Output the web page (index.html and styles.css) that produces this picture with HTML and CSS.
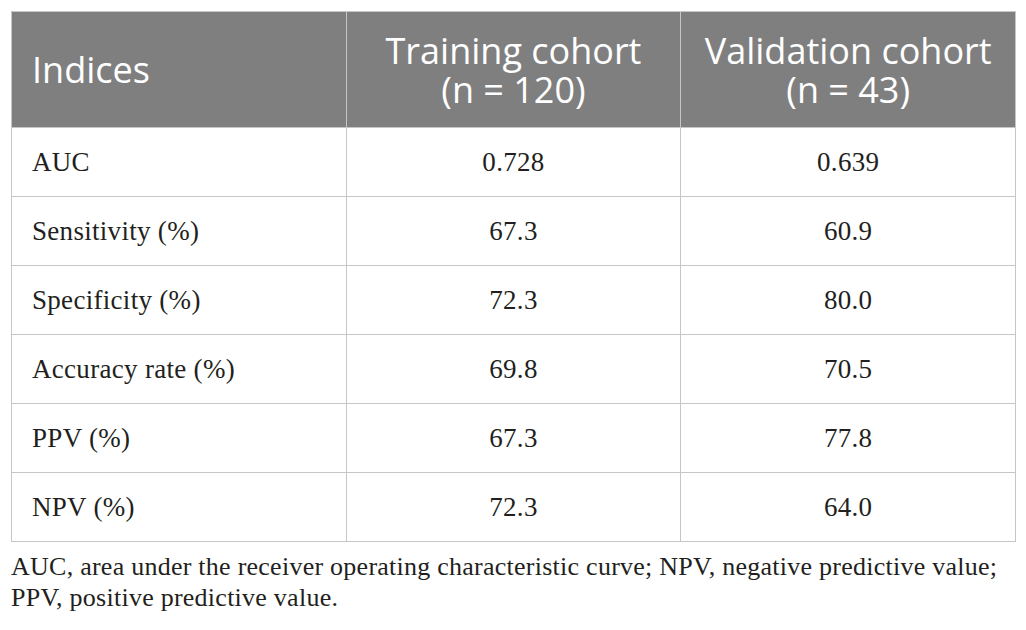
FILE: index.html
```html
<!DOCTYPE html>
<html>
<head>
<meta charset="utf-8">
<link rel="stylesheet" href="styles.css">
</head>
<body>
<div class="wrap">
<table class="data">
<thead>
<tr>
<th class="first">Indices</th>
<th>Training cohort<br>(n = 120)</th>
<th>Validation cohort<br>(n = 43)</th>
</tr>
</thead>
<tbody>
<tr><td class="first">AUC</td><td>0.728</td><td>0.639</td></tr>
<tr><td class="first">Sensitivity (%)</td><td>67.3</td><td>60.9</td></tr>
<tr><td class="first">Specificity (%)</td><td>72.3</td><td>80.0</td></tr>
<tr><td class="first">Accuracy rate (%)</td><td>69.8</td><td>70.5</td></tr>
<tr><td class="first">PPV (%)</td><td>67.3</td><td>77.8</td></tr>
<tr><td class="first">NPV (%)</td><td>72.3</td><td>64.0</td></tr>
</tbody>
</table>
<p class="note">AUC, area under the receiver operating characteristic curve; NPV, negative predictive value; PPV, positive predictive value.</p>
</div>
</body>
</html>
```
FILE: styles.css
```css
html, body {
  margin: 0;
  padding: 0;
  background: #ffffff;
}
.wrap {
  padding: 11px 0 0 11px;
  width: 1015px;
}
.data {
  border-collapse: collapse;
  width: 1005px;
  table-layout: fixed;
}
.data th, .data td {
  border: 1px solid #c6c6c6;
  text-align: center;
}
.data th {
  background: #7f7f7f;
  color: #ffffff;
  font-family: "Open Sans", "DejaVu Sans", sans-serif;
  font-weight: 400;
  font-size: 36px;
  line-height: 39px;
  height: 115px;
  padding: 0 8px;
  vertical-align: middle;
}
.data td {
  font-family: "Liberation Serif", serif;
  font-size: 27px;
  letter-spacing: 0.3px;
  color: #231f20;
  height: 68px;
  padding: 0 20px;
}
.data .first {
  text-align: left;
  padding-left: 20px;
}
.note {
  margin: 9px 0 0 0;
  font-family: "Liberation Serif", serif;
  font-size: 26px;
  letter-spacing: 0.25px;
  line-height: 31px;
  color: #231f20;
}
```
